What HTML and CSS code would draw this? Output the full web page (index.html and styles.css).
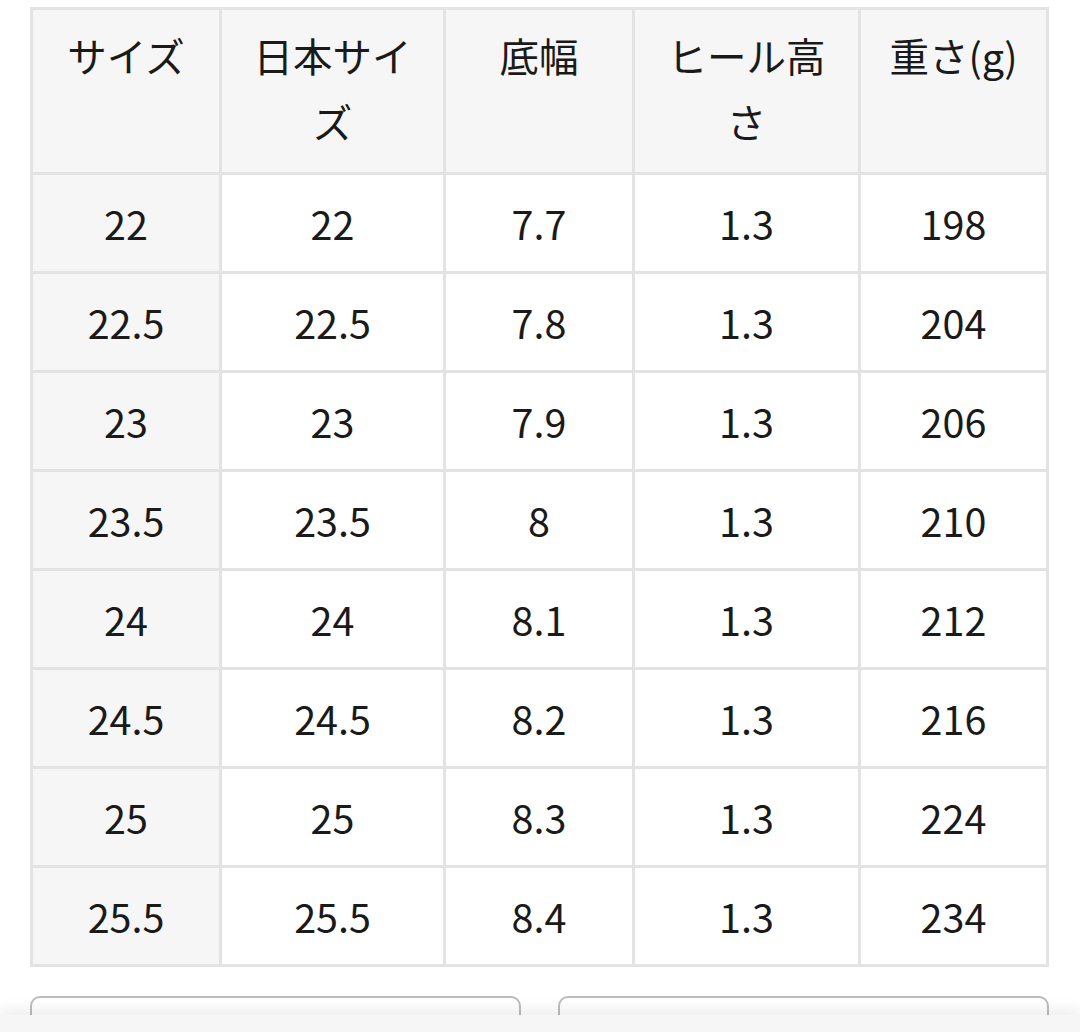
FILE: index.html
```html
<!DOCTYPE html>
<html lang="ja">
<head>
<meta charset="utf-8">
<link rel="stylesheet" href="styles.css">
</head>
<body>
<main class="page">
  <table class="size-table">
    <colgroup>
      <col class="c1"><col class="c2"><col class="c3"><col class="c4"><col class="c5">
    </colgroup>
    <thead>
      <tr class="head-row">
        <th>サイズ</th>
        <th>日本サイズ</th>
        <th>底幅</th>
        <th>ヒール高さ</th>
        <th>重さ(g)</th>
      </tr>
    </thead>
    <tbody>
      <tr><th>22</th><td>22</td><td>7.7</td><td>1.3</td><td>198</td></tr>
      <tr><th>22.5</th><td>22.5</td><td>7.8</td><td>1.3</td><td>204</td></tr>
      <tr><th>23</th><td>23</td><td>7.9</td><td>1.3</td><td>206</td></tr>
      <tr><th>23.5</th><td>23.5</td><td>8</td><td>1.3</td><td>210</td></tr>
      <tr><th>24</th><td>24</td><td>8.1</td><td>1.3</td><td>212</td></tr>
      <tr><th>24.5</th><td>24.5</td><td>8.2</td><td>1.3</td><td>216</td></tr>
      <tr><th>25</th><td>25</td><td>8.3</td><td>1.3</td><td>224</td></tr>
      <tr><th>25.5</th><td>25.5</td><td>8.4</td><td>1.3</td><td>234</td></tr>
    </tbody>
  </table>
  <div class="actions">
    <button class="btn" type="button"></button>
    <button class="btn" type="button"></button>
  </div>
</main>
<div class="bottom-bar"></div>
</body>
</html>
```

FILE: styles.css
```css
html, body {
  margin: 0;
  padding: 0;
  background: #ffffff;
}

body {
  font-family: "Noto Sans CJK JP", "Noto Sans", sans-serif;
  color: #1a1a1a;
  overflow: hidden;
}

.page {
  padding: 7px 31px 0 30px;
}

.size-table {
  width: 1016px;
  border-collapse: collapse;
  table-layout: fixed;
  border: 3px solid #e3e3e3;
}

.c1 { width: 189px; }
.c2 { width: 224px; }
.c3 { width: 189px; }
.c4 { width: 226px; }
.c5 { width: 188px; }

.size-table th,
.size-table td {
  border: 3px solid #e3e3e3;
  font-size: 39.5px;
  font-weight: 400;
  line-height: 66px;
  text-align: center;
  vertical-align: middle;
  padding: 0 18px;
}

.size-table thead th {
  background: #f6f6f6;
  vertical-align: top;
  padding-top: 12px;
  height: 150px;
  box-sizing: border-box;
}

.head-row {
  height: 165px;
}

.size-table tbody tr {
  height: 99px;
}

.size-table tbody th {
  background: #f6f6f6;
}

.size-table tbody td {
  background: #ffffff;
}

.actions {
  display: flex;
  gap: 37px;
  margin-top: 29px;
}

.btn {
  flex: 1;
  height: 60px;
  background: #ffffff;
  border: 2px solid #bcbcbc;
  border-radius: 10px;
}

.bottom-bar {
  position: fixed;
  left: 0;
  right: 0;
  bottom: 0;
  height: 17px;
  background: #f6f6f6;
  box-shadow: 0 -6px 14px rgba(0, 0, 0, 0.07);
}
```
